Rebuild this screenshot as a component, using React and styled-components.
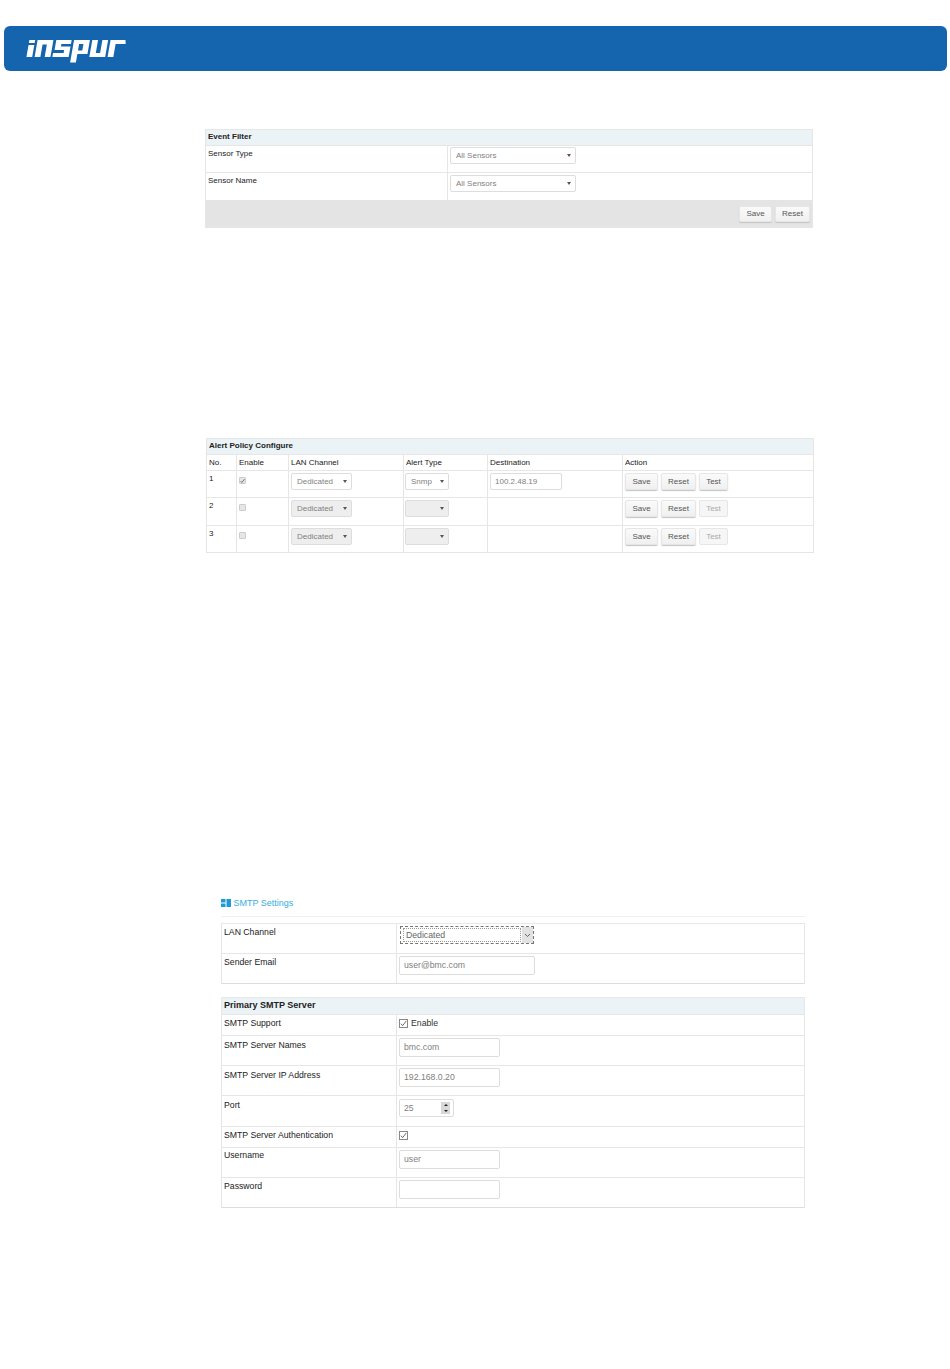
import styled, { createGlobalStyle } from 'styled-components';

const Global = createGlobalStyle`
  html, body { margin: 0; padding: 0; background: #fff; }
  body { font-family: "Liberation Sans", Arial, sans-serif; color: #222; font-size: 8px; }
  * { box-sizing: border-box; }
`
const Page = styled.div`width: 950px; min-height: 1369px; display: flex; flex-direction: column;`
const Banner = styled.header`height: 45px; margin: 26px 3px 0 4px; background: #1565ae; border-radius: 6px;
  display: flex; align-items: flex-start; padding: 12px 0 0 21px;`
const Panel = styled.section`width: ${p => p.$w}px; margin: ${p => p.$top}px 0 0 ${p => p.$left}px;
  border: 1px solid #e6e6e6;`
const PanelHead = styled.div`height: ${p => p.$h || 16}px; background: #ecf3f7; border-bottom: 1px solid #e6e6e6;
  font-weight: bold; font-size: ${p => p.$fs || 8}px; line-height: ${p => p.$h ? p.$h - 2 : 14}px; padding-left: 2px;`
const Row = styled.div`display: grid; grid-template-columns: ${p => p.$cols}; height: ${p => p.$h}px;
  border-bottom: ${p => p.$last ? 'none' : '1px solid #e6e6e6'};`
const Cell = styled.div`border-right: ${p => p.$end ? 'none' : '1px solid #e6e6e6'}; padding: ${p => p.$pad || '3px 2px'};
  font-size: ${p => p.$fs || 8}px; line-height: 9px; display: ${p => p.$flex ? 'flex' : 'block'}; gap: 3px;`
const Footer = styled.div`height: 27px; background: #e4e4e4; display: flex; justify-content: flex-end; gap: 3px; padding: 6px 2px 0 0;`
const Btn = styled.div`width: ${p => p.$w}px; height: ${p => p.$h || 16}px; background: ${p => p.$off ? '#f6f6f6' : 'linear-gradient(#fafafa, #f0f0f0)'};
  border: 1px solid #e6e6e6; border-radius: 2px; box-shadow: ${p => p.$off ? 'none' : '0 1px 1px #c4c4c4'};
  color: ${p => p.$off ? '#aaa' : '#555'}; font-size: 8px; line-height: ${p => (p.$h || 16) - 2}px; text-align: center;`
const Field = styled.div`position: relative; width: ${p => p.$w}px; height: ${p => p.$h || 17}px; background: ${p => p.$off ? '#eee' : '#fff'};
  border: 1px solid #ddd; border-radius: 2px; color: #808080; font-size: ${p => p.$fs || 8}px;
  line-height: ${p => (p.$h || 17) - 2}px; padding-left: ${p => p.$pl || 4}px;`
const Caret = styled.i`position: absolute; right: 4px; top: 6px; width: 0; height: 0;
  border-left: 2px solid transparent; border-right: 2px solid transparent; border-top: 3px solid #555;`
const Tick = styled.div`width: 7px; height: 7px; margin: 3px 0 0 0; background: #e6e6e6; border: 1px solid #ccc; border-radius: 1px;
  display: flex; align-items: center; justify-content: center;`
const Title = styled.div`display: flex; align-items: center; gap: 2.5px; width: 584px; height: 20px; margin: 344px 0 0 221px;
  color: #3aaede; font-size: 9px; padding-bottom: 8px; border-bottom: 1px solid #f0f0f0;`
const SmtpBox = styled.section`width: 584px; margin: ${p => p.$top}px 0 0 221px; border: 1px solid #e6e6e6;
  border-bottom-color: #ddd; border-top-color: #e8e8e8;`
const Dashed = styled.div`position: relative; width: 134px; height: 18px; border: 1px dashed #777; background: #fff;
  color: #666; font-size: 8.7px; line-height: 16px; padding-left: 5px;`
const DashedInner = styled.span`position: absolute; left: 2px; top: 1px; width: 118px; height: 14px; border: 1px dotted #999;`
const DashedArrow = styled.span`position: absolute; right: 0; top: 0; width: 11px; height: 16px; background: #e2e2e2;
  display: flex; align-items: center; justify-content: center;`
const Check = styled.div`width: 9px; height: 9px; border: 1px solid #888; background: #fff; display: flex; align-items: center; justify-content: center;`
const CheckRow = styled.div`display: flex; align-items: center; gap: 3px; color: #333; font-size: 8.7px;`
const Spin = styled.span`position: absolute; right: 3px; top: 2px; width: 9px; height: 12px; background: #d8d8d8;
  display: flex; flex-direction: column; justify-content: space-around; align-items: center;`
const SpinUp = styled.i`width: 0; height: 0; border-left: 2px solid transparent; border-right: 2px solid transparent; border-bottom: 2.5px solid #222;`
const SpinDown = styled.i`width: 0; height: 0; border-left: 2px solid transparent; border-right: 2px solid transparent; border-top: 2.5px solid #222;`

const CheckMark = ({ size = 7, color = '#555' }) => (
  <svg width={size} height={size} viewBox="0 0 8 8"><path d="M1 4.2 L3 6.4 L7.2 1" fill="none" stroke={color} strokeWidth="1" /></svg>
)

// inspur wordmark, hand drawn, slanted with a skew
const Logo = () => (
  <svg width="104" height="26" viewBox="0 0 104 26">
    <g transform="translate(4 -1) skewX(-10) scale(.96 1)" fill="#fff" fillRule="evenodd">
      <path d="M1 3 H7 V6 H1 Z M1 8 H7 V20 H1 Z" />
      <path d="M9.5 3 H26 V20 H20 V7.5 H15.5 V20 H9.5 Z" />
      <path d="M29 3 H45 V7 H35 V9.5 H45 V20 H28 V16 H39 V13 H29 Z" />
      <path d="M47.5 3 H64 V17 H53.5 V25.5 H47.5 Z M53.5 7 V13.5 H58 V7 Z" />
      <path d="M66.5 3 H72.5 V16 H77 V3 H83 V20 H66.5 Z" />
      <path d="M85.5 20 V3 H101 L102 7 H91.5 V20 Z" />
    </g>
  </svg>
)

const GridIcon = () => (
  <svg width="10" height="8" viewBox="0 0 10 8">
    <rect x="0" y="0" width="4.5" height="3.5" fill="#1c9bd6" />
    <rect x="0" y="4.5" width="4.5" height="3.5" fill="#1c9bd6" />
    <rect x="5.5" y="0" width="4.5" height="8" fill="#1c9bd6" />
  </svg>
)

const Sel = ({ w, off, pl, children }) => <Field $w={w} $off={off} $pl={pl || 5}>{children}<Caret /></Field>

const alertCols = '30px 52px 115px 84px 135px 1fr'
const smtpCols = '175px 1fr'
const alerts = [
  { no: 1, on: true, h: 27 },
  { no: 2, h: 28 },
  { no: 3, h: 26 },
]

function EventFilter() {
  return (
    <Panel $w={608} $top={58} $left={205}>
      <PanelHead>Event Filter</PanelHead>
      <Row $cols="242px 1fr" $h={27}>
        <Cell>Sensor Type</Cell>
        <Cell $end $pad="1px 2px"><Sel w={126}>All Sensors</Sel></Cell>
      </Row>
      <Row $cols="242px 1fr" $h={27} $last>
        <Cell>Sensor Name</Cell>
        <Cell $end $pad="2px 2px"><Sel w={126}>All Sensors</Sel></Cell>
      </Row>
      <Footer><Btn $w={33}>Save</Btn><Btn $w={35}>Reset</Btn></Footer>
    </Panel>
  )
}

function AlertPolicy() {
  return (
    <Panel $w={608} $top={210} $left={206}>
      <PanelHead>Alert Policy Configure</PanelHead>
      <Row $cols={alertCols} $h={16}>
        <Cell>No.</Cell><Cell>Enable</Cell><Cell>LAN Channel</Cell><Cell>Alert Type</Cell><Cell>Destination</Cell><Cell $end>Action</Cell>
      </Row>
      {alerts.map((a, i) => (
        <Row key={a.no} $cols={alertCols} $h={a.h} $last={i === 2}>
          <Cell $pad="3px 2px">{a.no}</Cell>
          <Cell $pad="3px 2px"><Tick>{a.on && <CheckMark size={6} color="#333" />}</Tick></Cell>
          <Cell $pad="2px 2px"><Sel w={61} off={!a.on}>Dedicated</Sel></Cell>
          <Cell $pad="2px 1px"><Sel w={44} off={!a.on}>{a.on ? 'Snmp' : ''}</Sel></Cell>
          <Cell $pad="2px 2px">{a.on && <Field $w={72}>100.2.48.19</Field>}</Cell>
          <Cell $end $flex $pad="2px 2px"><Btn $w={33} $h={17}>Save</Btn><Btn $w={35} $h={17}>Reset</Btn><Btn $w={29} $h={17} $off={!a.on}>Test</Btn></Cell>
        </Row>
      ))}
    </Panel>
  )
}

function Smtp() {
  return (
    <>
      <Title><GridIcon />SMTP Settings</Title>
      <SmtpBox $top={6}>
        <Row $cols={smtpCols} $h={30}>
          <Cell $fs={8.7} $pad="4px 2px">LAN Channel</Cell>
          <Cell $end $pad="2px 3px"><Dashed><DashedInner />Dedicated<DashedArrow>
            <svg width="7" height="5" viewBox="0 0 7 5"><path d="M1 1 L3.5 3.5 L6 1" fill="none" stroke="#666" /></svg>
          </DashedArrow></Dashed></Cell>
        </Row>
        <Row $cols={smtpCols} $h={29} $last>
          <Cell $fs={8.7} $pad="4px 2px">Sender Email</Cell>
          <Cell $end $pad="2px 2px"><Field $w={136} $h={19} $fs={8.7}>user@bmc.com</Field></Cell>
        </Row>
      </SmtpBox>
      <SmtpBox $top={13}>
        <PanelHead $h={17} $fs={9}>Primary SMTP Server</PanelHead>
        <Row $cols={smtpCols} $h={21}>
          <Cell $fs={8.7} $pad="4px 2px">SMTP Support</Cell>
          <Cell $end $pad="4px 2px"><CheckRow><Check><CheckMark /></Check>Enable</CheckRow></Cell>
        </Row>
        <Row $cols={smtpCols} $h={30}>
          <Cell $fs={8.7} $pad="5px 2px">SMTP Server Names</Cell>
          <Cell $end $pad="2px 2px"><Field $w={101} $h={19} $fs={8.7}>bmc.com</Field></Cell>
        </Row>
        <Row $cols={smtpCols} $h={30}>
          <Cell $fs={8.7} $pad="5px 2px">SMTP Server IP Address</Cell>
          <Cell $end $pad="2px 2px"><Field $w={101} $h={19} $fs={8.7}>192.168.0.20</Field></Cell>
        </Row>
        <Row $cols={smtpCols} $h={31}>
          <Cell $fs={8.7} $pad="5px 2px">Port</Cell>
          <Cell $end $pad="3px 2px"><Field $w={55} $h={18} $fs={8.7}>25<Spin><SpinUp /><SpinDown /></Spin></Field></Cell>
        </Row>
        <Row $cols={smtpCols} $h={21}>
          <Cell $fs={8.7} $pad="4px 2px">SMTP Server Authentication</Cell>
          <Cell $end $pad="4px 2px"><Check><CheckMark /></Check></Cell>
        </Row>
        <Row $cols={smtpCols} $h={30}>
          <Cell $fs={8.7} $pad="3px 2px">Username</Cell>
          <Cell $end $pad="2px 2px"><Field $w={101} $h={19} $fs={8.7}>user</Field></Cell>
        </Row>
        <Row $cols={smtpCols} $h={29} $last>
          <Cell $fs={8.7} $pad="4px 2px">Password</Cell>
          <Cell $end $pad="2px 2px"><Field $w={101} $h={19} $fs={8.7} /></Cell>
        </Row>
      </SmtpBox>
    </>
  )
}

function App() {
  return (
    <Page>
      <Global />
      <Banner><Logo /></Banner>
      <EventFilter />
      <AlertPolicy />
      <Smtp />
    </Page>
  )
}

export default App;
